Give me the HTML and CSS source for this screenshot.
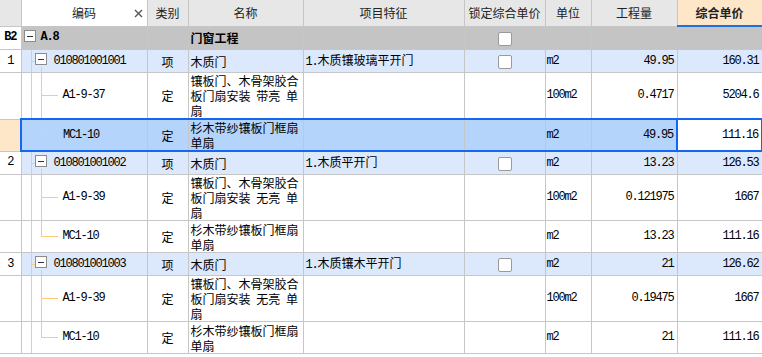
FILE: index.html
```html
<!DOCTYPE html>
<html lang="zh-CN">

<head>
    <meta charset="UTF-8">
    <meta name="viewport" content="width=device-width, initial-scale=1.0">
    <title>分部分项清单</title>
    <link rel="stylesheet" href="styles.css">
</head>

<body>
    <table class="grid">
        <colgroup>
            <col class="c-no">
            <col class="c-code">
            <col class="c-kind">
            <col class="c-name">
            <col class="c-feat">
            <col class="c-lock">
            <col class="c-unit">
            <col class="c-qty">
            <col class="c-price">
        </colgroup>
        <thead>
            <tr>
                <th class="no"></th>
                <th class="code-head">编码
                    <svg class="close" width="9" height="9" viewBox="0 0 9 9">
                        <path d="M1 1 L8 8 M8 1 L1 8" stroke="#555" stroke-width="1.4" fill="none" />
                    </svg>
                </th>
                <th>类别</th>
                <th>名称</th>
                <th>项目特征</th>
                <th>锁定综合单价</th>
                <th>单位</th>
                <th>工程量</th>
                <th class="active">综合单价</th>
            </tr>
        </thead>
        <tbody>
            <!-- 分部 -->
            <tr class="part">
                <td class="no strong">B2</td>
                <td class="code t-root"><span class="fold"></span><b>A.8</b></td>
                <td></td>
                <td class="name strong">门窗工程</td>
                <td></td>
                <td class="lock"><span class="check"></span></td>
                <td></td>
                <td></td>
                <td></td>
            </tr>

            <!-- 清单 1 -->
            <tr class="item">
                <td class="no">1</td>
                <td class="code t-item"><span class="fold"></span>010801001001</td>
                <td class="kind">项</td>
                <td class="name">木质门</td>
                <td class="feat"><span class="m">1.</span>木质镶玻璃平开门</td>
                <td class="lock"><span class="check"></span></td>
                <td class="unit">m2</td>
                <td class="num">49.95</td>
                <td class="num">160.31</td>
            </tr>
            <tr class="tall">
                <td class="no"></td>
                <td class="code t-child">A1-9-37</td>
                <td class="kind">定</td>
                <td class="name">镶板门、木骨架胶合板门扇安装 带亮 单扇</td>
                <td></td>
                <td></td>
                <td class="unit">100m2</td>
                <td class="num">0.4717</td>
                <td class="num">5204.6</td>
            </tr>
            <tr class="mid selected">
                <td class="no"></td>
                <td class="code t-last">MC1-10</td>
                <td class="kind">定</td>
                <td class="name">杉木带纱镶板门框扇单扇</td>
                <td></td>
                <td></td>
                <td class="unit">m2</td>
                <td class="num">49.95</td>
                <td class="num current">111.16</td>
            </tr>

            <!-- 清单 2 -->
            <tr class="item">
                <td class="no">2</td>
                <td class="code t-item"><span class="fold"></span>010801001002</td>
                <td class="kind">项</td>
                <td class="name">木质门</td>
                <td class="feat"><span class="m">1.</span>木质平开门</td>
                <td class="lock"><span class="check"></span></td>
                <td class="unit">m2</td>
                <td class="num">13.23</td>
                <td class="num">126.53</td>
            </tr>
            <tr class="tall">
                <td class="no"></td>
                <td class="code t-child">A1-9-39</td>
                <td class="kind">定</td>
                <td class="name">镶板门、木骨架胶合板门扇安装 无亮 单扇</td>
                <td></td>
                <td></td>
                <td class="unit">100m2</td>
                <td class="num">0.121975</td>
                <td class="num">1667</td>
            </tr>
            <tr class="mid">
                <td class="no"></td>
                <td class="code t-last">MC1-10</td>
                <td class="kind">定</td>
                <td class="name">杉木带纱镶板门框扇单扇</td>
                <td></td>
                <td></td>
                <td class="unit">m2</td>
                <td class="num">13.23</td>
                <td class="num">111.16</td>
            </tr>

            <!-- 清单 3 -->
            <tr class="item">
                <td class="no">3</td>
                <td class="code t-item"><span class="fold"></span>010801001003</td>
                <td class="kind">项</td>
                <td class="name">木质门</td>
                <td class="feat"><span class="m">1.</span>木质镶木平开门</td>
                <td class="lock"><span class="check"></span></td>
                <td class="unit">m2</td>
                <td class="num">21</td>
                <td class="num">126.62</td>
            </tr>
            <tr class="tall">
                <td class="no"></td>
                <td class="code t-child">A1-9-39</td>
                <td class="kind">定</td>
                <td class="name">镶板门、木骨架胶合板门扇安装 无亮 单扇</td>
                <td></td>
                <td></td>
                <td class="unit">100m2</td>
                <td class="num">0.19475</td>
                <td class="num">1667</td>
            </tr>
            <tr class="mid">
                <td class="no"></td>
                <td class="code t-last">MC1-10</td>
                <td class="kind">定</td>
                <td class="name">杉木带纱镶板门框扇单扇</td>
                <td></td>
                <td></td>
                <td class="unit">m2</td>
                <td class="num">21</td>
                <td class="num">111.16</td>
            </tr>
        </tbody>
    </table>
</body>

</html>
```

FILE: styles.css
```css
body {
    margin: 0;
    font-family: "Noto Sans CJK SC", sans-serif;
    font-size: 12px;
    color: #000;
    background: #fff;
    overflow: hidden;
}

.grid {
    border-collapse: collapse;
    table-layout: fixed;
    width: 762px;
}

.c-no { width: 21px; }
.c-code { width: 126px; }
.c-kind { width: 41px; }
.c-name { width: 115px; }
.c-feat { width: 161px; }
.c-lock { width: 81px; }
.c-unit { width: 46px; }
.c-qty { width: 86px; }
.c-price { width: 85px; }

.grid th,
.grid td {
    border: 1px solid #c6c6c6;
    padding: 0 2px;
    line-height: 15px;
    vertical-align: middle;
    white-space: nowrap;
    overflow: hidden;
}

.grid tr > :first-child {
    border-left: none;
}

.grid thead th {
    height: 25px;
    border-top: none;
    background: #e7e7e7;
    font-weight: normal;
    color: #222;
    text-align: center;
}

.grid th.code-head {
    position: relative;
    background: #fff;
}

.close {
    position: absolute;
    right: 4px;
    top: 9px;
}

.grid th.active {
    background: #fee6c9;
    font-weight: bold;
    border-bottom: 2px solid #1f6fe5;
}

/* row kinds */
.part td { height: 22px; background: #c4c4c4; }
.item td { height: 22px; background: #dce8fc; }
.tall td { height: 45px; }
.mid td { height: 31px; }
.selected td { height: 30px; }

.grid td.no {
    background: #fff;
    text-align: center;
    padding: 0;
    font-family: "Liberation Mono", monospace;
    letter-spacing: -1.2px;
}

.strong {
    font-weight: bold;
}

.kind {
    text-align: center;
}

.grid td.name {
    white-space: normal;
    word-spacing: 3px;
}

.m,
.code,
.unit,
.num {
    font-family: "Liberation Mono", monospace;
    letter-spacing: -1.2px;
}

.grid td.unit {
    padding-left: 1px;
}

.num {
    text-align: right;
}

.grid td.num {
    padding-right: 3px;
}

.lock {
    text-align: center;
}

.check {
    display: inline-block;
    width: 12px;
    height: 12px;
    border: 1px solid #9a9a9a;
    border-radius: 2px;
    background: #fff;
    vertical-align: middle;
}

/* tree column */
.grid td.code {
    padding-right: 0;
    background-repeat: no-repeat;
}

.fold {
    display: inline-block;
    width: 10px;
    height: 10px;
    border: 1px solid #8c8c8c;
    background: #fff linear-gradient(#333, #333) center / 6px 1px no-repeat;
    vertical-align: middle;
    margin-top: -2px;
}

.t-root {
    padding-left: 4px;
    background-image: linear-gradient(#fdc97b, #fdc97b);
    background-position: 9px 100%;
    background-size: 1px calc(50% - 6px);
}

.t-root .fold {
    margin-right: 5px;
}

.grid td.t-item {
    padding-left: 13px;
    background-image:
        linear-gradient(#fdc97b, #fdc97b),
        linear-gradient(#fdc97b, #fdc97b),
        linear-gradient(#fdc97b, #fdc97b);
    background-position: 9px 0, 9px 50%, 19px 100%;
    background-size: 1px 100%, 4px 1px, 1px calc(50% - 6px);
}

.t-item .fold {
    margin-right: 7px;
}

.grid td.t-child,
.grid td.t-last {
    padding-left: 41px;
    background-image:
        linear-gradient(#fdc97b, #fdc97b),
        linear-gradient(#fdc97b, #fdc97b),
        linear-gradient(#fdc97b, #fdc97b);
    background-position: 9px 0, 19px 0, 19px 50%;
    background-size: 1px 100%, 1px 100%, 17px 1px;
}

.grid td.t-last {
    background-size: 1px 100%, 1px 50%, 17px 1px;
}

/* current row */
.selected td {
    background-color: #b4d4fb;
    border-top: 2px solid #1467f0;
    border-bottom: 2px solid #1467f0;
}

.selected td.code {
    border-left: 2px solid #1467f0;
}

.grid .selected td.no {
    background: #fee6c9;
    border-top: 1px solid #c6c6c6;
    border-bottom: 1px solid #c6c6c6;
}

.selected td.current {
    background: #fff;
    border-left: 2px solid #1467f0;
    border-right: 2px solid #1467f0;
}
```
